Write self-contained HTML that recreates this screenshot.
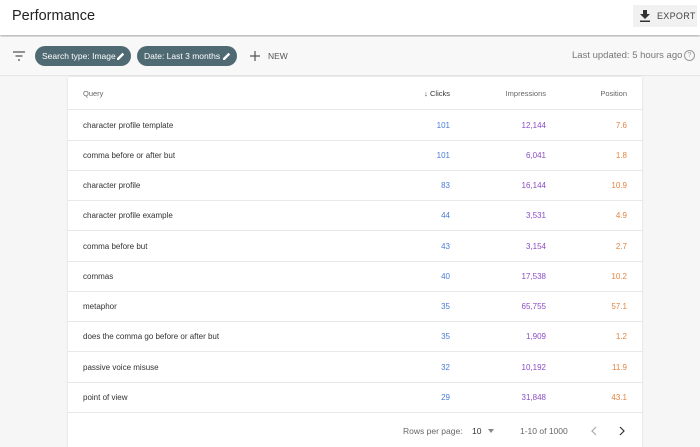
<!DOCTYPE html>
<html><head><style>
body{margin:0;width:700px;height:437px;overflow:hidden;background:#f6f6f6;font-family:"Liberation Sans",sans-serif;position:relative}
.hdr{position:absolute;left:0;top:0;width:700px;height:35px;background:#fff;box-shadow:0 1px 3px rgba(0,0,0,.35)}
.hdr h1{margin:0;position:absolute;left:12px;top:8px;font-size:14.5px;font-weight:normal;color:#222}
.exp{position:absolute;left:633px;top:5px;width:64px;height:22px;background:#f1f1f1;font-size:9px;color:#444;letter-spacing:.3px}
.bar{position:absolute;top:37px;left:0;width:700px;height:38px;background:#f8f8f8;border-bottom:1px solid #e6e6e6}
.chip{position:absolute;top:9px;height:20px;border-radius:10px;background:#4f6a73;color:#fff;font-size:8.5px;line-height:20px;padding-left:7px;box-sizing:border-box}
.card{position:absolute;left:68px;top:77px;width:574px;height:370px;background:#fff;box-shadow:0 0 2px rgba(0,0,0,.15)}
.row{position:absolute;left:0;width:574px;height:30px;border-bottom:1px solid #e8e8e8;font-size:8px;color:#333}
.row span{position:absolute;top:11px}
.q{left:15px}.c{right:192px;color:#4a7bd6}.i{right:96px;color:#8c4cc6}.p{right:15px;color:#e38540}
.th{color:#666;font-size:7.5px}
</style></head><body>
<div class="hdr"><h1>Performance</h1>
<div class="exp"><svg style="position:absolute;left:7px;top:5px" width="10" height="12" viewBox="0 0 10 12"><path d="M3 0h4v4h3L5 9 0 4h3z M0 10.5h10v1.5H0z" fill="#333"/></svg><span style="position:absolute;left:24px;top:6px">EXPORT</span></div></div>
<div class="bar">
<svg style="position:absolute;left:13px;top:14px" width="12" height="10"><path d="M0 1h12M2.5 5h7M5 9h2" stroke="#555" stroke-width="1.3"/></svg>
<div class="chip" style="left:35px;width:96px">Search type: Image <svg style="position:absolute;right:6px;top:6px" width="8" height="8" viewBox="0 0 8 8"><path d="M0 8V6.3L5.5.8 7.2 2.5 1.7 8z" fill="#fff"/></svg></div>
<div class="chip" style="left:137px;width:100px">Date: Last 3 months <svg style="position:absolute;right:6px;top:6px" width="8" height="8" viewBox="0 0 8 8"><path d="M0 8V6.3L5.5.8 7.2 2.5 1.7 8z" fill="#fff"/></svg></div>
<svg style="position:absolute;left:250px;top:14px" width="10" height="10"><path d="M5 0v10M0 5h10" stroke="#555" stroke-width="1.2"/></svg>
<span style="position:absolute;left:268px;top:14px;font-size:8.5px;color:#555">NEW</span>
<span style="position:absolute;left:572px;top:13px;font-size:9.5px;color:#777">Last updated: 5 hours ago</span>
<span style="position:absolute;left:684px;top:13px;width:9px;height:9px;border:1px solid #999;border-radius:50%;font-size:7px;color:#999;text-align:center;line-height:9px">?</span>
</div>
<div class="card">
<div class="row th" style="top:0;height:32px"><span class="q" style="top:12px">Query</span><span class="c" style="top:12px;color:#333">↓ Clicks</span><span class="i" style="top:12px;color:#666">Impressions</span><span class="p" style="top:12px;color:#666">Position</span></div>
<div class="row" style="top:33px"><span class="q">character profile template</span><span class="c">101</span><span class="i">12,144</span><span class="p">7.6</span></div>
<div class="row" style="top:63px"><span class="q">comma before or after but</span><span class="c">101</span><span class="i">6,041</span><span class="p">1.8</span></div>
<div class="row" style="top:93px"><span class="q">character profile</span><span class="c">83</span><span class="i">16,144</span><span class="p">10.9</span></div>
<div class="row" style="top:123px"><span class="q">character profile example</span><span class="c">44</span><span class="i">3,531</span><span class="p">4.9</span></div>
<div class="row" style="top:154px"><span class="q">comma before but</span><span class="c">43</span><span class="i">3,154</span><span class="p">2.7</span></div>
<div class="row" style="top:184px"><span class="q">commas</span><span class="c">40</span><span class="i">17,538</span><span class="p">10.2</span></div>
<div class="row" style="top:214px"><span class="q">metaphor</span><span class="c">35</span><span class="i">65,755</span><span class="p">57.1</span></div>
<div class="row" style="top:244px"><span class="q">does the comma go before or after but</span><span class="c">35</span><span class="i">1,909</span><span class="p">1.2</span></div>
<div class="row" style="top:275px"><span class="q">passive voice misuse</span><span class="c">32</span><span class="i">10,192</span><span class="p">11.9</span></div>
<div class="row" style="top:305px"><span class="q">point of view</span><span class="c">29</span><span class="i">31,848</span><span class="p">43.1</span></div>
<div style="position:absolute;top:349px;left:0;width:574px;font-size:8.5px;color:#666">
<span style="position:absolute;left:335px">Rows per page:</span>
<span style="position:absolute;left:404px;color:#333">10</span>
<span style="position:absolute;left:420px;top:3px;border:3.5px solid transparent;border-top:4px solid #888"></span>
<span style="position:absolute;left:452px">1-10 of 1000</span>
<svg style="position:absolute;left:523px;top:0" width="6" height="10"><path d="M5 1L1 5l4 4" fill="none" stroke="#aaa" stroke-width="1.2"/></svg>
<svg style="position:absolute;left:551px;top:0" width="6" height="10"><path d="M1 1l4 4-4 4" fill="none" stroke="#333" stroke-width="1.2"/></svg>
</div>
</div>
</body></html>
